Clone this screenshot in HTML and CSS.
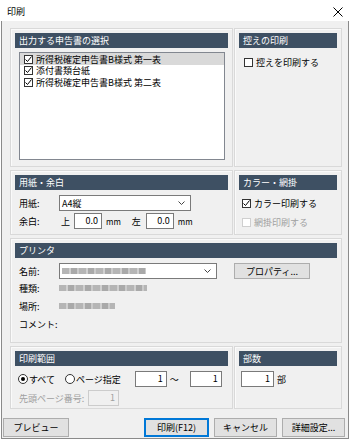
FILE: index.html
```html
<!DOCTYPE html>
<html lang="ja">
  <head>
    <meta charset="UTF-8" />
    <meta name="viewport" content="width=device-width, initial-scale=1.0" />
    <title>印刷</title>
    <link rel="stylesheet" href="styles.css">
  </head>
  <body>
    <div class="window">
      <div class="titlebar">
        <span class="title">印刷</span>
        <svg class="close" width="10" height="10" viewBox="0 0 10 10">
          <path d="M0.5 0.5 L9.5 9.5 M9.5 0.5 L0.5 9.5" stroke="#000" stroke-width="1" fill="none" />
        </svg>
      </div>

      <div class="dialog">
        <div class="groups">
          <!-- 出力する申告書 -->
          <section class="group">
            <div class="group-title">出力する申告書の選択</div>
            <div class="listbox">
              <div class="list-row selected">
                <span class="cb checked"><svg width="9" height="9" viewBox="0 0 9 9"><path d="M1.5 4.5 L3.5 6.5 L7.5 1.5" stroke="#000" stroke-width="1" fill="none" /></svg></span>
                <span class="list-text">所得税確定申告書B様式 第一表</span>
              </div>
              <div class="list-row">
                <span class="cb checked"><svg width="9" height="9" viewBox="0 0 9 9"><path d="M1.5 4.5 L3.5 6.5 L7.5 1.5" stroke="#000" stroke-width="1" fill="none" /></svg></span>
                <span class="list-text">添付書類台紙</span>
              </div>
              <div class="list-row">
                <span class="cb checked"><svg width="9" height="9" viewBox="0 0 9 9"><path d="M1.5 4.5 L3.5 6.5 L7.5 1.5" stroke="#000" stroke-width="1" fill="none" /></svg></span>
                <span class="list-text">所得税確定申告書B様式 第二表</span>
              </div>
            </div>
          </section>

          <!-- 控え -->
          <section class="group">
            <div class="group-title">控えの印刷</div>
            <label class="check-row first">
              <span class="cb"></span>控えを印刷する
            </label>
          </section>

          <!-- 用紙・余白 -->
          <section class="group">
            <div class="group-title">用紙・余白</div>
            <div class="field-row paper">
              <span class="field-label">用紙:</span>
              <div class="select paper-select">
                <span>A4縦</span>
                <svg width="7" height="4" viewBox="0 0 7 4"><path d="M0.5 0.5 L3.5 3.5 L6.5 0.5" stroke="#444" fill="none" /></svg>
              </div>
            </div>
            <div class="field-row margin">
              <span class="field-label">余白:</span>
              <span class="side">上</span>
              <span class="num-input mm-input">0.0</span>
              <span class="unit">mm</span>
              <span class="side left">左</span>
              <span class="num-input mm-input">0.0</span>
              <span class="unit">mm</span>
            </div>
          </section>

          <!-- カラー -->
          <section class="group">
            <div class="group-title">カラー・網掛</div>
            <label class="check-row color">
              <span class="cb checked"><svg width="9" height="9" viewBox="0 0 9 9"><path d="M1.5 4.5 L3.5 6.5 L7.5 1.5" stroke="#000" stroke-width="1" fill="none" /></svg></span>カラー印刷する
            </label>
            <label class="check-row disabled">
              <span class="cb"></span>網掛印刷する
            </label>
          </section>

          <!-- プリンタ -->
          <section class="group wide">
            <div class="group-title">プリンタ</div>
            <div class="field-row printer-name">
              <span class="field-label">名前:</span>
              <div class="select printer-select">
                <span class="blur" style="width: 84px"></span>
                <svg width="7" height="4" viewBox="0 0 7 4"><path d="M0.5 0.5 L3.5 3.5 L6.5 0.5" stroke="#444" fill="none" /></svg>
              </div>
              <button class="btn props">プロパティ...</button>
            </div>
            <div class="field-row info">
              <span class="field-label">種類:</span>
              <span class="blur" style="width: 88px"></span>
            </div>
            <div class="field-row info">
              <span class="field-label">場所:</span>
              <span class="blur" style="width: 56px"></span>
            </div>
            <div class="field-row info">
              <span class="field-label">コメント:</span>
            </div>
          </section>

          <!-- 印刷範囲 -->
          <section class="group">
            <div class="group-title">印刷範囲</div>
            <div class="field-row range">
              <span class="radio on"></span><span class="radio-label">すべて</span>
              <span class="radio"></span><span class="radio-label">ページ指定</span>
              <span class="num-input page-input">1</span>
              <span class="tilde">～</span>
              <span class="num-input page-input">1</span>
            </div>
            <div class="field-row start-page">
              <span class="muted">先頭ページ番号:</span>
              <span class="num-input disabled-input">1</span>
            </div>
          </section>

          <!-- 部数 -->
          <section class="group">
            <div class="group-title">部数</div>
            <div class="field-row copies">
              <span class="num-input copies-input">1</span>
              <span class="unit-big">部</span>
            </div>
          </section>
        </div>

        <div class="buttons">
          <button class="btn preview">プレビュー</button>
          <button class="btn primary">印刷(F12)</button>
          <button class="btn">キャンセル</button>
          <button class="btn">詳細設定...</button>
        </div>
      </div>
    </div>
  </body>
</html>
```

FILE: styles.css
```css
* {
  box-sizing: border-box;
}

body {
  margin: 0;
  font-family: "Noto Sans CJK JP", "Meiryo UI", sans-serif;
  font-size: 9px;
  color: #000;
  background: #fff;
}

.window {
  width: 350px;
  height: 442px;
}

.titlebar {
  height: 21px;
  display: flex;
  align-items: center;
  justify-content: space-between;
  padding: 2px 7px 0 7px;
  background: #fff;
}

.title {
  font-size: 9px;
}

.dialog {
  margin: 0 1px;
  height: 418px;
  padding: 7px 7px 0 8px;
  background: #f0f0f0;
  border: 1px solid #8a8a8a;
  border-top: none;
}

.groups {
  display: grid;
  grid-template-columns: 223px 108px;
  grid-template-rows: 139px 65px 105px 63px;
  gap: 3px 1px;
}

.group {
  border: 1px solid #d9d9d9;
  box-shadow: inset 1px 1px 0 #fafafa;
  padding: 4px;
}

.group.wide {
  grid-column: 1 / 3;
}

.group-title {
  height: 15px;
  line-height: 15px;
  padding-left: 4px;
  background: #3e5063;
  color: #fff;
  font-size: 9px;
  white-space: nowrap;
  overflow: hidden;
}

/* list */
.listbox {
  margin: 4px 0 0 4px;
  width: 206px;
  height: 108px;
  background: #fff;
  border: 1px solid #828790;
}

.list-row {
  height: 11.5px;
  display: flex;
  align-items: center;
  padding-left: 4px;
  white-space: nowrap;
}

.list-text {
  line-height: 11px;
}

.list-row.selected {
  background: #d9d9d9;
  height: 12px;
}

.cb {
  width: 9px;
  height: 9px;
  border: 1px solid #333;
  background: #fff;
  margin-right: 3px;
  flex: none;
  display: inline-flex;
  align-items: center;
  justify-content: center;
}

.cb svg {
  display: block;
}

.cb.checked svg {
  margin: -1px;
}

.check-row {
  display: flex;
  align-items: center;
  height: 10px;
  margin-left: 5px;
  white-space: nowrap;
}

.check-row.first {
  margin-top: 9px;
}

.check-row.color {
  margin-top: 8px;
  margin-left: 3px;
}

.check-row.disabled {
  margin-top: 9px;
  margin-left: 3px;
  color: #a0a0a0;
}

.check-row.disabled .cb {
  border-color: #cfcfcf;
}

/* fields */
.field-row {
  display: flex;
  align-items: center;
  white-space: nowrap;
}

.field-label {
  width: 44px;
  padding-left: 4px;
  flex: none;
}

.paper {
  margin-top: 5px;
  height: 16px;
}

.margin {
  margin-top: 2px;
  height: 16px;
}

.select {
  height: 16px;
  background: #fff;
  border: 1px solid #7a7a7a;
  display: flex;
  align-items: center;
  justify-content: space-between;
  padding: 0 5px 0 2px;
}

.paper-select {
  width: 132px;
}

.printer-select {
  width: 158px;
}

.side {
  width: 15px;
  padding-left: 2px;
}

.side.left {
  margin-left: 11px;
  width: 14px;
  padding-left: 0;
}

.num-input {
  height: 16px;
  line-height: 14px;
  background: #fff;
  border: 1px solid #7a7a7a;
  text-align: right;
  padding-right: 3px;
  display: inline-block;
}

.mm-input {
  width: 28px;
}

.unit {
  margin-left: 4px;
  font-size: 8px;
}

.blur {
  display: inline-block;
  height: 6px;
  background: repeating-linear-gradient(90deg, #b5b5b5 0 7px, #d0d0d0 7px 9px, #a9a9a9 9px 15px, #cacaca 15px 17px);
  filter: blur(0.6px);
}

.printer-name {
  margin-top: 5px;
  height: 16px;
}

.btn {
  font-family: inherit;
  font-size: 9px;
  height: 19px;
  padding: 0;
  background: #e1e1e1;
  border: 1px solid #adadad;
  color: #000;
}

.btn.props {
  margin-left: 17px;
  width: 76px;
  height: 16px;
}

.info {
  height: 18px;
}

.info:nth-of-type(2) {
  margin-top: 3px;
}

/* range */
.range {
  margin-top: 5px;
  height: 16px;
  padding-left: 3px;
}

.radio {
  width: 10px;
  height: 10px;
  border: 1px solid #333;
  border-radius: 50%;
  background: #fff;
  display: inline-flex;
  align-items: center;
  justify-content: center;
  flex: none;
}

.radio.on::after {
  content: "";
  width: 4px;
  height: 4px;
  border-radius: 50%;
  background: #000;
}

.radio-label {
  margin-left: 1px;
  margin-right: 10px;
}

.page-input {
  width: 32px;
  margin-left: 4px;
}

.tilde {
  margin-left: 3px;
  width: 16px;
}

.start-page {
  margin-top: 3px;
  height: 16px;
  padding-left: 4px;
}

.muted {
  color: #a0a0a0;
  width: 69px;
}

.disabled-input {
  width: 31px;
  background: #f0f0f0;
  border-color: #cccccc;
  color: #a0a0a0;
}

.copies {
  margin-top: 5px;
  height: 16px;
  padding-left: 2px;
}

.copies-input {
  width: 33px;
}

.unit-big {
  margin-left: 3px;
}

/* bottom buttons */
.buttons {
  display: flex;
  margin: 9px -4px 0 -7px;
  gap: 5px;
}

.buttons .btn {
  width: 63px;
}

.buttons .preview {
  width: 66px;
  margin-right: auto;
}

.buttons .primary {
  width: 65px;
  border: 1px solid #0078d7;
  box-shadow: inset 0 0 0 1px #0078d7;
}
```
